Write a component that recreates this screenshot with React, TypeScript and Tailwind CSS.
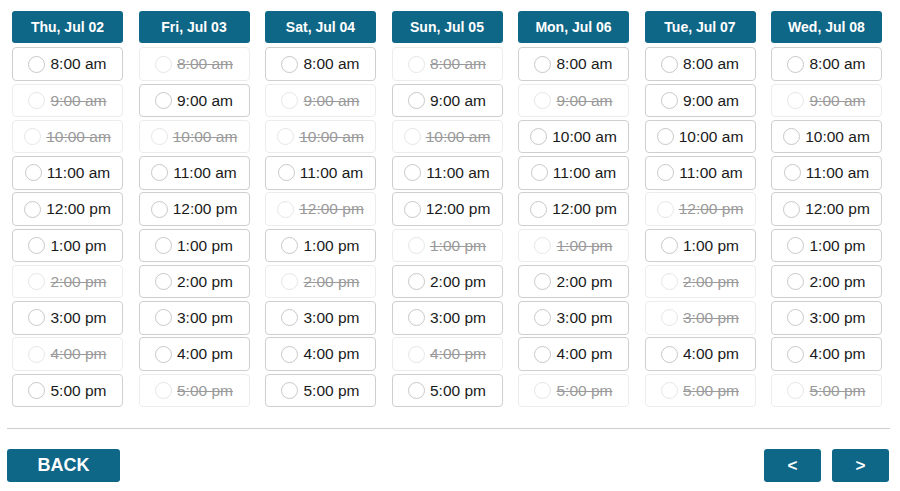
import React from 'react'

const days = ['Thu, Jul 02', 'Fri, Jul 03', 'Sat, Jul 04', 'Sun, Jul 05', 'Mon, Jul 06', 'Tue, Jul 07', 'Wed, Jul 08']
const times = ['8:00 am', '9:00 am', '10:00 am', '11:00 am', '12:00 pm', '1:00 pm', '2:00 pm', '3:00 pm', '4:00 pm', '5:00 pm']

// 1 = open, 0 = taken
const open = [
  [1, 0, 0, 1, 1, 1, 0, 1, 0, 1],
  [0, 1, 0, 1, 1, 1, 1, 1, 1, 0],
  [1, 0, 0, 1, 0, 1, 0, 1, 1, 1],
  [0, 1, 0, 1, 1, 0, 1, 1, 0, 1],
  [1, 0, 1, 1, 1, 0, 1, 1, 1, 0],
  [1, 1, 1, 1, 0, 1, 0, 0, 1, 0],
  [1, 0, 1, 1, 1, 1, 1, 1, 1, 0],
]

function Slot({ label, enabled }: { label: string; enabled: boolean }) {
  return (
    <button
      disabled={!enabled}
      className={
        enabled
          ? 'h-[33.5px] w-full flex items-center justify-center gap-[5px] rounded border border-[#cfcfcf] bg-white text-[15.5px] text-[#1a1a1a]'
          : 'h-[33.5px] w-full flex items-center justify-center gap-[5px] rounded border border-[#ececec] bg-white text-[15.5px] text-[#9a9a9a] line-through'
      }
    >
      <span
        className={
          enabled
            ? 'w-[17px] h-[17px] rounded-full border border-[#c8c8c8] bg-white'
            : 'w-[17px] h-[17px] rounded-full border border-[#e6e6e6] bg-white'
        }
      />
      <span>{label}</span>
    </button>
  )
}

export default function App() {
  return (
    <div
      className="w-[900px] h-[491px] bg-white pl-[7px] pr-[10px] pt-[11px]"
      style={{ fontFamily: '"Liberation Sans", Arial, sans-serif' }}
    >
      <div className="grid grid-cols-7 gap-x-[15.5px] pl-[5px] pr-[8px]">
        {days.map((day, d) => (
          <div key={day} className="flex flex-col gap-[2.75px]">
            <div className="h-[32px] mb-[1.5px] flex items-center justify-center rounded-[3px] bg-[#0f6787] text-white text-[14px] font-bold">
              {day}
            </div>
            {times.map((t, i) => (
              <Slot key={t} label={t} enabled={open[d][i] === 1} />
            ))}
          </div>
        ))}
      </div>

      <div className="mt-[21px] border-t border-[#cfcfcf]" />

      <div className="mt-[20px] flex items-center justify-between">
        <button className="w-[113px] h-[33px] rounded-[3px] bg-[#0f6787] text-white text-[18px] font-bold">
          BACK
        </button>
        <div className="flex gap-[11px] pr-[1px]">
          <button className="w-[57px] h-[33px] rounded-[3px] bg-[#0f6787] text-white text-[17px] font-bold">
            &lt;
          </button>
          <button className="w-[57px] h-[33px] rounded-[3px] bg-[#0f6787] text-white text-[17px] font-bold">
            &gt;
          </button>
        </div>
      </div>
    </div>
  )
}
